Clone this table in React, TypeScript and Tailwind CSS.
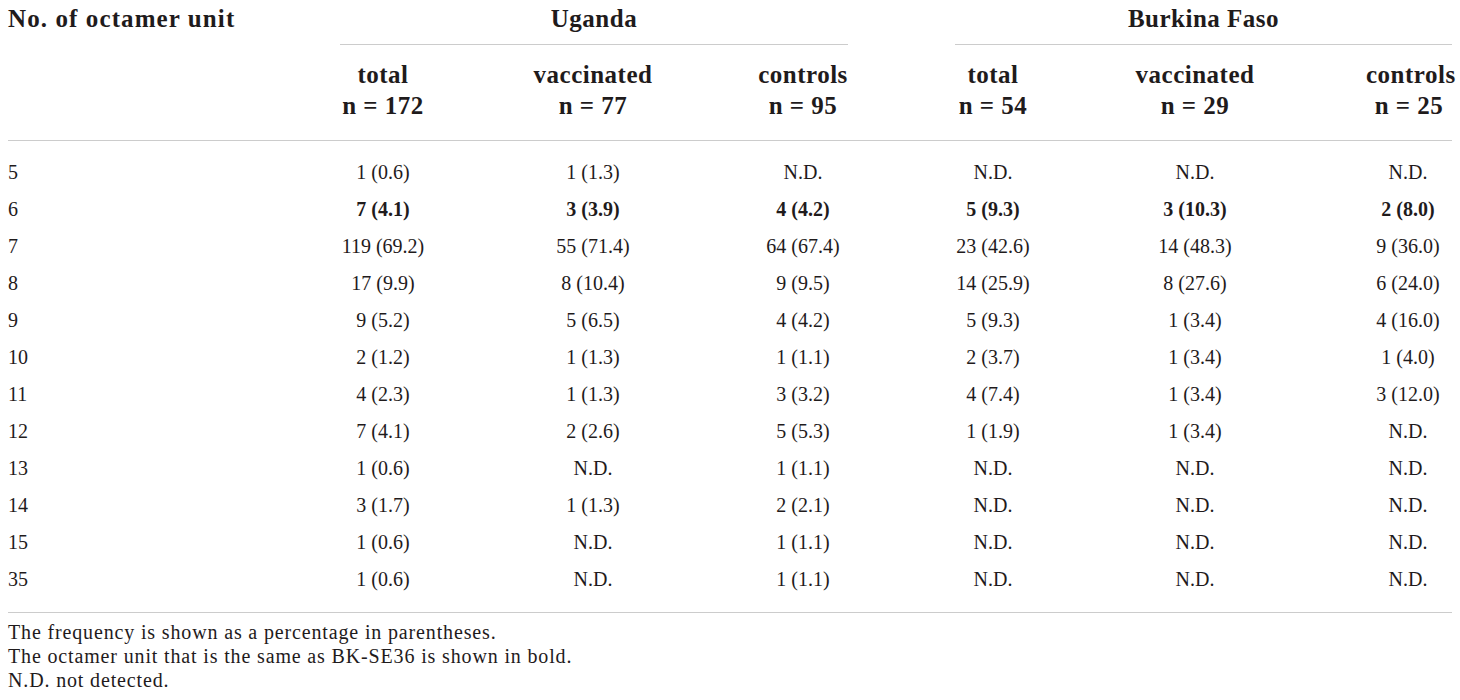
import React from "react";

const rows: { unit: string; values: string[]; bold?: boolean }[] = [
  { unit: "5", values: ["1 (0.6)", "1 (1.3)", "N.D.", "N.D.", "N.D.", "N.D."] },
  { unit: "6", values: ["7 (4.1)", "3 (3.9)", "4 (4.2)", "5 (9.3)", "3 (10.3)", "2 (8.0)"], bold: true },
  { unit: "7", values: ["119 (69.2)", "55 (71.4)", "64 (67.4)", "23 (42.6)", "14 (48.3)", "9 (36.0)"] },
  { unit: "8", values: ["17 (9.9)", "8 (10.4)", "9 (9.5)", "14 (25.9)", "8 (27.6)", "6 (24.0)"] },
  { unit: "9", values: ["9 (5.2)", "5 (6.5)", "4 (4.2)", "5 (9.3)", "1 (3.4)", "4 (16.0)"] },
  { unit: "10", values: ["2 (1.2)", "1 (1.3)", "1 (1.1)", "2 (3.7)", "1 (3.4)", "1 (4.0)"] },
  { unit: "11", values: ["4 (2.3)", "1 (1.3)", "3 (3.2)", "4 (7.4)", "1 (3.4)", "3 (12.0)"] },
  { unit: "12", values: ["7 (4.1)", "2 (2.6)", "5 (5.3)", "1 (1.9)", "1 (3.4)", "N.D."] },
  { unit: "13", values: ["1 (0.6)", "N.D.", "1 (1.1)", "N.D.", "N.D.", "N.D."] },
  { unit: "14", values: ["3 (1.7)", "1 (1.3)", "2 (2.1)", "N.D.", "N.D.", "N.D."] },
  { unit: "15", values: ["1 (0.6)", "N.D.", "1 (1.1)", "N.D.", "N.D.", "N.D."] },
  { unit: "35", values: ["1 (0.6)", "N.D.", "1 (1.1)", "N.D.", "N.D.", "N.D."] },
];

const subHeads = [
  ["total", "n = 172"],
  ["vaccinated", "n = 77"],
  ["controls", "n = 95"],
  ["total", "n = 54"],
  ["vaccinated", "n = 29"],
  ["controls", "n = 25"],
];

const cols = "grid grid-cols-[290px_170px_250px_170px_210px_194px_160px]";

export default function App() {
  return (
    <div className="w-[1460px] h-[700px] bg-white px-2 text-[#1f1b1c] font-['Liberation_Serif',serif] overflow-hidden">
      {/* header */}
      <div className={`${cols} border-b border-[#cccccc] font-bold text-[25px] tracking-[0.5px]`}>
        <div className="row-span-2 pt-[3px] leading-[32px] tracking-[1.1px]">No. of octamer unit</div>
        <div className="col-span-3 ml-[42px] mr-[40px] pt-[3px] pb-[9px] leading-[32px] text-center border-b border-[#cccccc]">
          Uganda
        </div>
        <div className="col-span-3 ml-[67px] pt-[3px] pb-[9px] leading-[32px] text-center border-b border-[#cccccc]">
          Burkina Faso
        </div>
        {subHeads.map(([a, b], i) => (
          <div
            key={i}
            className={`pt-[14px] pb-[19px] leading-[31px] text-center ${i === 5 ? "pl-[74px]" : ""}`}
          >
            <div>{a}</div>
            <div>{b}</div>
          </div>
        ))}
      </div>

      {/* body */}
      <div className="pt-[13px] pb-[14px] border-b border-[#cccccc] text-[20px]">
        {rows.map((r) => (
          <div key={r.unit} className={`${cols} h-[37px] leading-[37px]`}>
            <div>{r.unit}</div>
            {r.values.map((v, i) => (
              <div
                key={i}
                className={`text-center ${r.bold ? "font-bold" : ""} ${i === 5 ? "pl-[72px]" : ""}`}
              >
                {v}
              </div>
            ))}
          </div>
        ))}
      </div>

      {/* notes */}
      <div className="pt-[7px] text-[20px] leading-[24px] tracking-[0.85px]">
        <p>The frequency is shown as a percentage in parentheses.</p>
        <p>The octamer unit that is the same as BK-SE36 is shown in bold.</p>
        <p>N.D. not detected.</p>
      </div>
    </div>
  );
}
